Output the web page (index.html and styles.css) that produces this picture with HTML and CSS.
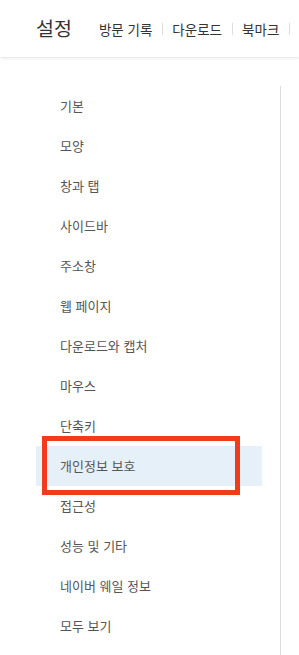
FILE: index.html
```html
<!DOCTYPE html>
<html lang="ko">
<head>
  <meta charset="UTF-8">
  <meta name="viewport" content="width=device-width, initial-scale=1.0">
  <title>설정</title>
  <link rel="stylesheet" href="styles.css">
</head>
<body>
  <header class="topbar">
      <h1 class="title">설정</h1>
      <nav class="tabs">
          <span class="tab">방문 기록</span>
          <span class="sep"></span>
          <span class="tab">다운로드</span>
          <span class="sep"></span>
          <span class="tab">북마크</span>
          <span class="sep"></span>
          <span class="tab">확장</span>
      </nav>
  </header>

  <div class="layout">
      <ul class="menu">
          <li class="menu-item">기본</li>
          <li class="menu-item">모양</li>
          <li class="menu-item">창과 탭</li>
          <li class="menu-item">사이드바</li>
          <li class="menu-item">주소창</li>
          <li class="menu-item">웹 페이지</li>
          <li class="menu-item">다운로드와 캡처</li>
          <li class="menu-item">마우스</li>
          <li class="menu-item">단축키</li>
          <li class="menu-item active">개인정보 보호<span class="highlight"></span></li>
          <li class="menu-item">접근성</li>
          <li class="menu-item">성능 및 기타</li>
          <li class="menu-item">네이버 웨일 정보</li>
          <li class="menu-item">모두 보기</li>
      </ul>
      <div class="content"></div>
  </div>
</body>
</html>
```

FILE: styles.css
```css
body {
    margin: 0;
    font-family: 'Noto Sans CJK KR', 'Noto Sans', sans-serif;
    background-color: #fff;
    color: #333;
    overflow: hidden;
}

.topbar {
    height: 57px;
    display: flex;
    align-items: center;
    padding-left: 36px;
    box-shadow: 0 1px 3px rgba(0, 0, 0, 0.12);
    white-space: nowrap;
    overflow: hidden;
}

.title {
    margin: 0 27px 2px 0;
    font-size: 19.5px;
    font-weight: 400;
    line-height: 24px;
    color: #333;
}

.tabs {
    display: flex;
    align-items: center;
    gap: 9.5px;
}

.tab {
    font-size: 13.5px;
    line-height: 18px;
    color: #333;
}

.sep {
    width: 1px;
    height: 12px;
    background-color: #ddd;
}

.layout {
    display: flex;
    margin-top: 29px;
}

.menu {
    list-style: none;
    margin: 0;
    padding: 0 18px 20px 36px;
    border-right: 1px solid #ddd;
}

.menu-item {
    position: relative;
    width: 202px;
    height: 40px;
    padding-left: 24px;
    font-size: 13px;
    line-height: 40px;
    color: #555;
}

.menu-item.active {
    background-color: #e6f0f9;
}

.highlight {
    position: absolute;
    left: 6px;
    top: -10px;
    width: 188px;
    height: 49px;
    border: 5px solid #f23a1c;
}

.content {
    flex: 1;
}
```
